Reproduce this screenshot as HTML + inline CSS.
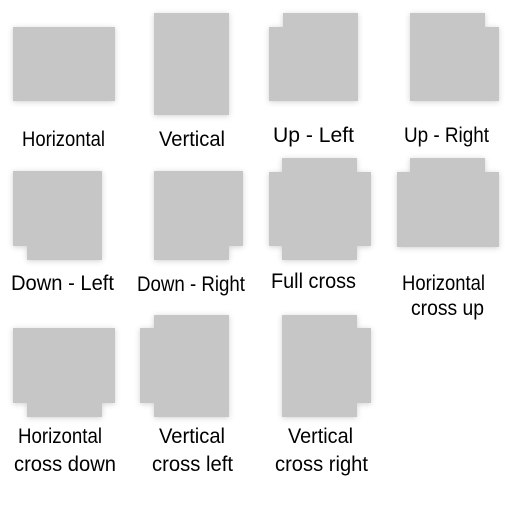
<!DOCTYPE html>
<html><head><meta charset="utf-8"><style>
html,body{margin:0;padding:0;background:#fff;width:512px;height:512px;overflow:hidden}
svg{display:block}
.s{fill:#c6c6c6;filter:url(#sh)}
text{font-family:"Liberation Sans",sans-serif;font-size:21px;fill:#000}
</style></head><body>
<svg width="512" height="512" viewBox="0 0 512 512">
<defs><filter id="sh" x="-20%" y="-20%" width="140%" height="140%"><feDropShadow dx="0" dy="1" stdDeviation="3" flood-color="#000" flood-opacity="0.18"/></filter></defs>
<!-- row1 -->
<path class="s" d="M13 27H115V101H13Z"/>
<path class="s" d="M154 13H229V115H154Z"/>
<path class="s" d="M283 13H358V101H269V27H283Z"/>
<path class="s" d="M410 13H485V27H499V101H410Z"/>
<!-- row2 -->
<path class="s" d="M13 171H102V260H27V246H13Z"/>
<path class="s" d="M154 171H243V246H229V260H154Z"/>
<path class="s" d="M282 158H357V172H371V246H357V260H282V246H269V172H282Z"/>
<path class="s" d="M410 158H485V172H499V247H397V172H410Z"/>
<!-- row3 -->
<path class="s" d="M13 328H115V403H102V417H27V403H13Z"/>
<path class="s" d="M154 315H229V417H154V403H140V328H154Z"/>
<path class="s" d="M282 315H357V328H371V403H357V417H282Z"/>
<!-- labels -->
<text x="22" y="146" textLength="83" lengthAdjust="spacingAndGlyphs">Horizontal</text>
<text x="159" y="146" textLength="66" lengthAdjust="spacingAndGlyphs">Vertical</text>
<text x="273" y="142" textLength="81" lengthAdjust="spacingAndGlyphs">Up - Left</text>
<text x="404" y="142" textLength="85" lengthAdjust="spacingAndGlyphs">Up - Right</text>
<text x="11" y="290" textLength="103" lengthAdjust="spacingAndGlyphs">Down - Left</text>
<text x="137" y="291" textLength="108" lengthAdjust="spacingAndGlyphs">Down - Right</text>
<text x="271" y="288" textLength="85" lengthAdjust="spacingAndGlyphs">Full cross</text>
<text x="402" y="290" textLength="83" lengthAdjust="spacingAndGlyphs">Horizontal</text>
<text x="411" y="315" textLength="73" lengthAdjust="spacingAndGlyphs">cross up</text>
<text x="18" y="443" textLength="84" lengthAdjust="spacingAndGlyphs">Horizontal</text>
<text x="14" y="471" textLength="102" lengthAdjust="spacingAndGlyphs">cross down</text>
<text x="159" y="443" textLength="66" lengthAdjust="spacingAndGlyphs">Vertical</text>
<text x="152" y="471" textLength="81" lengthAdjust="spacingAndGlyphs">cross left</text>
<text x="288" y="443" textLength="65" lengthAdjust="spacingAndGlyphs">Vertical</text>
<text x="275" y="471" textLength="93" lengthAdjust="spacingAndGlyphs">cross right</text>
</svg>
</body></html>
